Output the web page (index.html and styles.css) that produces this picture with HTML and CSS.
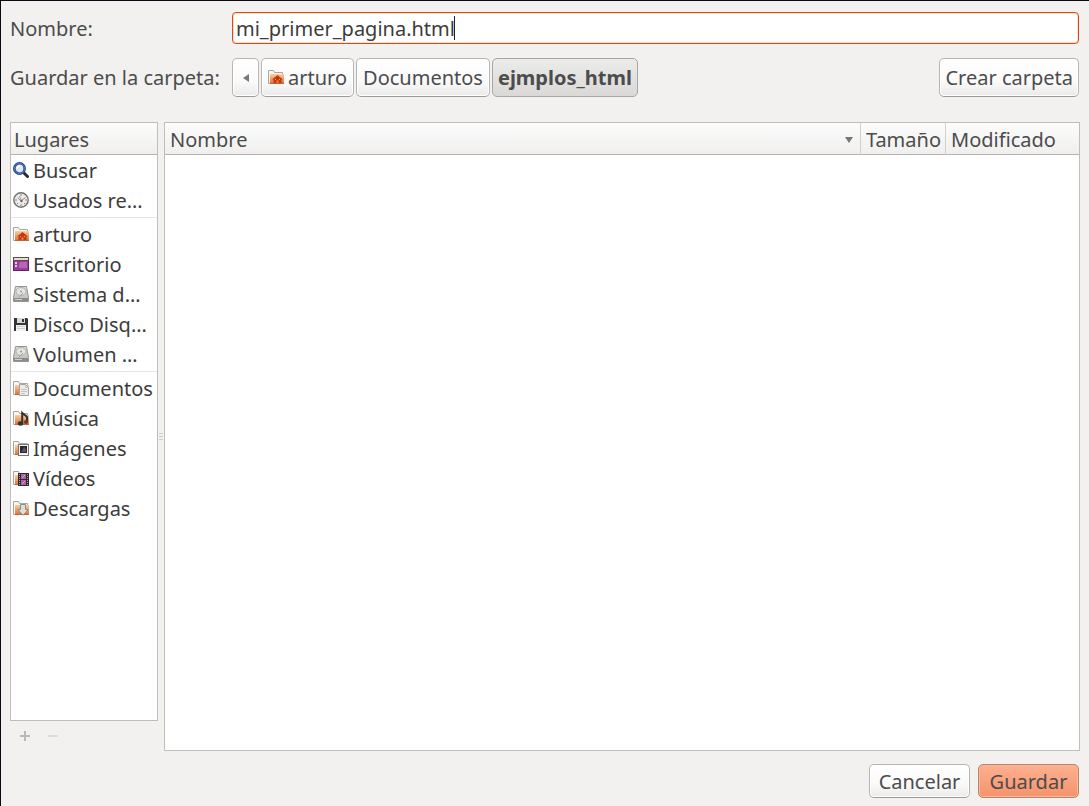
FILE: index.html
```html
<!DOCTYPE html>
<html lang="es">
<head>
    <meta charset="UTF-8">
    <meta name="viewport" content="width=device-width, initial-scale=1.0">
    <title>Guardar como</title>
    <link rel="stylesheet" href="styles.css">
</head>
<body>
    <!-- Shared icons -->
    <svg class="sprite" aria-hidden="true">
        <defs>
            <linearGradient id="orange" x1="0" y1="0" x2="0" y2="1">
                <stop offset="0" stop-color="#f7cfa0"/>
                <stop offset="1" stop-color="#e06a34"/>
            </linearGradient>
            <linearGradient id="metal" x1="0" y1="0" x2="0" y2="1">
                <stop offset="0" stop-color="#dcdcda"/>
                <stop offset="1" stop-color="#bcbcba"/>
            </linearGradient>
        </defs>
        <symbol id="folder" viewBox="0 0 16 16">
            <path d="M.5 14.500V1.500H5.500L6.500 3.500H14.500V14.500Z" fill="#f8f7f5" stroke="#a8a6a3"/>
            <path d="M2 5H16V15H2Z" fill="url(#orange)"/>
            <path d="M2 14.500H16" stroke="#b9683f"/>
        </symbol>
        <symbol id="home" viewBox="0 0 16 16">
            <use href="#folder"/>
            <path d="M9.500 6L15 10.500H13.500V14H10.500V11.500H8.500V14H5.500V10.500H4Z" fill="#c8380c"/>
            <path d="M7 10H8V11H7ZM11 10H12V11H11Z" fill="#f0a070"/>
        </symbol>
        <symbol id="search" viewBox="0 0 16 16">
            <path d="M11 11L14.500 14.500" stroke="#2b2b2b" stroke-width="3" stroke-linecap="round"/>
            <circle cx="6.500" cy="6.500" r="5.200" fill="#dfe6ee" stroke="#27468c" stroke-width="2.600"/>
            <circle cx="6.500" cy="6.500" r="5.200" fill="none" stroke="#5579bd" stroke-width="1"/>
            <path d="M4 6.500A3 3 0 0 1 7 4" fill="none" stroke="#fff" stroke-width="1.500"/>
        </symbol>
        <symbol id="recent" viewBox="0 0 16 16">
            <circle cx="8" cy="8" r="7.200" fill="#ecebe9" stroke="#70706e" stroke-width="1.400"/>
            <path d="M8 2V4M8 12V14M2 8H4M12 8H14M4 12L5 11M12 12L11 11" stroke="#888"/>
            <path d="M8.500 9.500L4.500 5.500M8.500 9.500L6.500 4" stroke="#999"/>
            <path d="M8.500 8.500L12.500 5.500" stroke="#d96b50"/>
            <circle cx="8.500" cy="9" r="1.200" fill="#666"/>
        </symbol>
        <symbol id="desktop" viewBox="0 0 16 16">
            <rect x=".5" y="1.500" width="15" height="13" fill="#9b3d9b" stroke="#65226a"/>
            <rect y="1" width="16" height="4" fill="#5b4b49"/>
            <rect x="1" y="2" width="14" height="2" fill="#e8ddcb"/>
            <path d="M2 6H4V8H2ZM2 9H4V11H2Z" fill="#e3cbe4"/>
            <path d="M7 6H14V12H6V9Z" fill="#b565b6"/>
        </symbol>
        <symbol id="disk" viewBox="0 0 16 16">
            <path d="M2.500 .5H13.500L15.500 11.500V15.500H.5V11.500Z" fill="url(#metal)" stroke="#949492"/>
            <ellipse cx="8" cy="5.500" rx="5" ry="4" fill="#e4e4e0" stroke="#b0b0ad"/>
            <circle cx="8" cy="5.500" r="1" fill="#999"/>
            <path d="M6 11L10 7" stroke="#a2a2a0"/>
            <path d="M1 12H15V15H1Z" fill="#8b8b89"/>
            <path d="M2 13.500H9" stroke="#d2d2d0"/>
        </symbol>
        <symbol id="floppy" viewBox="0 0 16 16">
            <path d="M1 2H14L15 3V15H1Z" fill="#33333a"/>
            <path d="M4 2H12V7H4Z" fill="#d8d8d6"/>
            <path d="M9 3H11V6H9Z" fill="#33333a"/>
            <path d="M3 9H13V15H3Z" fill="#f1f1ef"/>
            <path d="M4 10.500H12M4 12.500H12" stroke="#cfcfcd"/>
        </symbol>
        <symbol id="documents" viewBox="0 0 16 16">
            <use href="#folder"/>
            <path d="M6.500 4.500H12.500L15.500 7.500V15.500H6.500Z" fill="#ededeb" stroke="#a4a4a1"/>
            <path d="M12.500 4.500V7.500H15.500M8 9.500H14M8 11.500H14M8 13.500H12" fill="none" stroke="#c4c4c1"/>
        </symbol>
        <symbol id="music" viewBox="0 0 16 16">
            <use href="#folder"/>
            <path d="M9.200 13V3C11 5 13 5 14 7V11" fill="none" stroke="#35332f" stroke-width="2"/>
            <ellipse cx="7.500" cy="13.500" rx="2.700" ry="2.200" fill="#35332f"/>
            <ellipse cx="13" cy="12" rx="2" ry="2" fill="#5c3c2b"/>
        </symbol>
        <symbol id="pictures" viewBox="0 0 16 16">
            <use href="#folder"/>
            <rect x="5.500" y="4.500" width="10" height="11" fill="#f4f4f2" stroke="#777774"/>
            <rect x="7" y="6" width="7" height="7" fill="#28282d"/>
            <path d="M8 12L11 7L13 9V12Z" fill="#5c5270"/>
        </symbol>
        <symbol id="videos" viewBox="0 0 16 16">
            <use href="#folder"/>
            <rect x="5" y="3" width="11" height="13" fill="#34272f"/>
            <path d="M8 4H13V9H8ZM8 10H13V15H8Z" fill="#a865a2"/>
            <path d="M6.500 4V16M14.500 4V16" stroke="#a89da5" stroke-dasharray="1 1"/>
            <path d="M9 8L12 5M9 14L12 11" stroke="#d19acb"/>
        </symbol>
        <symbol id="downloads" viewBox="0 0 16 16">
            <use href="#folder"/>
            <path d="M7.500 4.500H12.500V9.500H15.200L10 15.300L4.800 9.500H7.500Z" fill="#dededb" stroke="#8d8d88"/>
        </symbol>
    </svg>

    <form class="dialog">
        <div class="row">
            <label class="label" for="filename">Nombre:</label>
            <div class="field">
                <input type="text" id="filename" value="mi_primer_pagina.html" spellcheck="false">
                <span class="caret"></span>
            </div>
        </div>

        <div class="row">
            <span class="label">Guardar en la carpeta:</span>
            <nav class="path" aria-label="Carpeta">
                <button type="button" class="btn back" aria-label="Atrás">
                    <svg width="6" height="8" viewBox="0 0 6 8"><path d="M6 0V8L0 4Z" fill="#777"/></svg>
                </button>
                <button type="button" class="btn"><svg class="icon"><use href="#home"/></svg>arturo</button>
                <button type="button" class="btn">Documentos</button>
                <button type="button" class="btn active">ejmplos_html</button>
            </nav>
            <button type="button" class="btn">Crear carpeta</button>
        </div>

        <main class="panes">
            <aside class="sidebar">
                <div class="places">
                    <h2>Lugares</h2>
                    <ul>
                        <li><svg class="icon"><use href="#search"/></svg>Buscar</li>
                        <li><svg class="icon"><use href="#recent"/></svg>Usados re…</li>
                    </ul>
                    <ul>
                        <li><svg class="icon"><use href="#home"/></svg>arturo</li>
                        <li><svg class="icon"><use href="#desktop"/></svg>Escritorio</li>
                        <li><svg class="icon"><use href="#disk"/></svg>Sistema d…</li>
                        <li><svg class="icon"><use href="#floppy"/></svg>Disco Disq…</li>
                        <li><svg class="icon"><use href="#disk"/></svg>Volumen …</li>
                    </ul>
                    <ul>
                        <li><svg class="icon"><use href="#documents"/></svg>Documentos</li>
                        <li><svg class="icon"><use href="#music"/></svg>Música</li>
                        <li><svg class="icon"><use href="#pictures"/></svg>Imágenes</li>
                        <li><svg class="icon"><use href="#videos"/></svg>Vídeos</li>
                        <li><svg class="icon"><use href="#downloads"/></svg>Descargas</li>
                    </ul>
                </div>
                <div class="tools">
                    <button type="button" aria-label="Añadir" disabled>
                        <svg width="10" height="10"><path d="M5 0V10M0 5H10" stroke="#bab9b6" stroke-width="2"/></svg>
                    </button>
                    <button type="button" aria-label="Quitar" disabled>
                        <svg width="10" height="10"><path d="M0 5H10" stroke="#dddcda" stroke-width="2"/></svg>
                    </button>
                </div>
            </aside>
            <div class="splitter">
                <svg width="4" height="8"><path d="M0 .5H4M0 3.500H4M0 6.500H4" stroke="#cfccc8"/></svg>
            </div>
            <div class="files">
                <table>
                    <thead>
                        <tr>
                            <th><div class="sort">Nombre <svg width="8" height="6"><path d="M0 0H8L4 6Z" fill="#777"/></svg></div></th>
                            <th class="size">Tamaño</th>
                            <th class="modified">Modificado</th>
                        </tr>
                    </thead>
                </table>
            </div>
        </main>

        <footer class="actions">
            <button type="button" class="btn">Cancelar</button>
            <button type="submit" class="btn primary">Guardar</button>
        </footer>
    </form>
</body>
</html>
```
FILE: styles.css
```css
* {
    box-sizing: border-box;
}

body {
    margin: 0;
    background-color: #f2f1f0;
    color: #4c4c4c;
    font-family: "Noto Sans", "Open Sans", sans-serif;
    font-size: 20px;
    line-height: 30px;
}

button, input {
    font: inherit;
    color: inherit;
}

svg {
    display: block;
    flex-shrink: 0;
}

.sprite {
    position: absolute;
    width: 0;
    height: 0;
}

.icon {
    width: 16px;
    height: 16px;
    margin-bottom: 2px;
}

.dialog {
    display: flex;
    flex-direction: column;
    min-height: 100vh;
    padding: 11px 9px 8px;
    border-top: 1px solid #0c0914;
    border-left: 1px solid #0c0914;
}

.row {
    display: flex;
    align-items: center;
    margin-bottom: 14px;
    padding-right: 1px;
}

.label {
    flex: 0 0 222px;
    padding-top: 1px;
}

.field {
    position: relative;
    flex: 1;
}

.field input {
    display: block;
    width: 100%;
    height: 32px;
    padding: 0 3px;
    border: 1px solid #dd4814;
    border-radius: 4px;
    background-color: #fff;
    box-shadow: inset 0 0 0 1px #f8e0d6;
    color: #3c3c3c;
    outline: none;
}

.caret {
    position: absolute;
    top: 4px;
    left: 222px;
    width: 1px;
    height: 24px;
    background-color: #222;
}

.path {
    display: flex;
    flex: 1;
    gap: 2px;
}

.btn {
    display: flex;
    align-items: center;
    justify-content: center;
    gap: 4px;
    height: 39px;
    padding: 0 5px;
    border: 1px solid #b8b6b3;
    border-bottom-color: #9d9b98;
    border-radius: 5px;
    background: linear-gradient(#fff, #fafafa 60%, #ebeae9);
    box-shadow: inset 0 0 0 1px #fff;
    white-space: nowrap;
}

.path .btn {
    padding: 0 6px;
}

.path .back {
    width: 27px;
}

.path .active {
    padding: 0 5px;
    border-color: #a9a7a4;
    background: linear-gradient(#ebebea, #dad9d8);
    box-shadow: none;
    font-weight: bold;
}

.panes {
    display: flex;
    flex: 1;
    margin-top: 11px;
}

.sidebar {
    display: flex;
    flex-direction: column;
    width: 148px;
}

.places {
    flex: 1;
    border: 1px solid #c0beb9;
    background-color: #fff;
    color: #3c3c3c;
}

.places h2, th {
    height: 32px;
    border-bottom: 1px solid #b5b3af;
    background: linear-gradient(#fcfcfc, #f0efee);
    color: #4c4c4c;
    font-size: 20px;
    font-weight: normal;
    text-align: left;
}

.places h2 {
    margin: 0 0 1px;
    padding: 2px 3px 0;
    line-height: 29px;
}

.places ul {
    margin: 0;
    padding: 0;
    list-style: none;
}

.places ul + ul {
    margin-top: 1px;
    padding-top: 2px;
    border-top: 1px solid #e6e5e4;
}

.places li {
    display: flex;
    align-items: center;
    gap: 4px;
    height: 30px;
    padding-left: 2px;
    white-space: nowrap;
}

.tools {
    display: flex;
    gap: 18px;
    height: 30px;
    padding-left: 10px;
}

.tools button {
    padding: 0;
    border: none;
    background: none;
}

.splitter {
    display: flex;
    align-items: center;
    justify-content: center;
    width: 6px;
}

.files {
    flex: 1;
    border: 1px solid #c0beb9;
    background-color: #fff;
}

table {
    width: 100%;
    border-spacing: 0;
}

th {
    padding: 2px 5px 0;
    line-height: 29px;
}

th + th {
    border-left: 1px solid #d3d1ce;
}

.size {
    width: 85px;
    padding-right: 4px;
}

.modified {
    width: 134px;
}

.sort {
    display: flex;
    align-items: center;
    justify-content: space-between;
    padding-right: 2px;
}

.actions {
    display: flex;
    justify-content: flex-end;
    gap: 8px;
    margin-top: 13px;
    padding-right: 1px;
}

.actions .btn {
    min-width: 101px;
    height: 34px;
    padding-top: 1px;
}

.btn.primary {
    border-color: #b98468;
    background: linear-gradient(#fdb091, #f5936b);
    box-shadow: inset 0 0 0 1px #fbb597;
}
```
